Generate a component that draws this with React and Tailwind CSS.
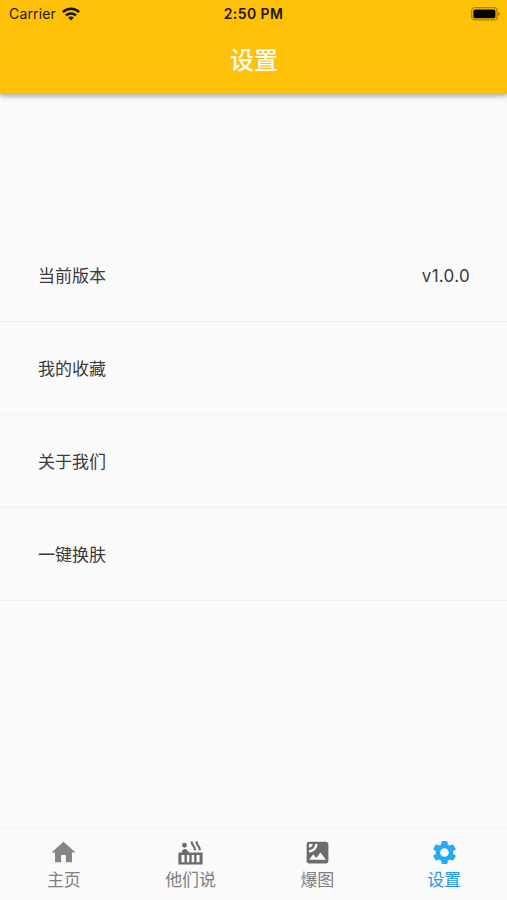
import { MdHome, MdSatellite, MdSettings } from 'react-icons/md';

const HotTubIcon = ({ className }) => (
  <svg className={className} viewBox="0 0 24 24" fill="currentColor">
    <circle cx="7" cy="6" r="2" />
    <path d="M11.15 12c-.31-.22-.59-.46-.82-.72l-1.4-1.55c-.19-.21-.43-.38-.69-.5-.29-.14-.62-.23-.96-.23h-.03C6.01 9 5 10.01 5 11.25V12H2v10h20V12H11.15zM7 20H4.5v-6H7v6zm4 0H9v-6h2v6zm4 0h-2v-6h2v6zm4.5 0H17v-6h2.5v6z" />
    <path
      d="M13 2.8C12.8 6.6 16 6.4 15.7 10.2M17 2.8C16.8 6.6 20 6.4 19.7 10.2"
      fill="none"
      stroke="currentColor"
      strokeWidth="1.8"
    />
  </svg>
);

const rows = [
  { label: '当前版本', value: 'v1.0.0', border: 'border-b border-[#f0f0f0]' },
  { label: '我的收藏', border: 'border-b border-[#f2f2f2]' },
  { label: '关于我们', border: 'border-b-2 border-[#f4f4f4]' },
  { label: '一键换肤', border: 'border-b border-[#f0f0f0]' },
];

const tabs = [
  { label: '主页', Icon: MdHome, iconColor: 'text-[#858585]' },
  { label: '他们说', Icon: HotTubIcon, iconColor: 'text-[#6c6c6c]' },
  { label: '爆图', Icon: MdSatellite, iconColor: 'text-[#6c6c6c]' },
  { label: '设置', Icon: MdSettings, iconColor: 'text-[#27aaf5]', active: true },
];

const WifiIcon = () => (
  <svg className="w-[18px] h-[14px]" viewBox="0 0 18 14" fill="none" stroke="#1c1602" strokeWidth="2.5">
    <path d="M0.9 5.1C5.4 0.7 12.6 0.7 17.1 5.1" />
    <path d="M4 8.4C6.8 5.7 11.2 5.7 14 8.4" />
    <path d="M9 13.6L6.2 10.7C7.8 9.2 10.2 9.2 11.8 10.7Z" fill="#1c1602" stroke="none" />
  </svg>
);

const BatteryIcon = () => (
  <svg className="w-[30px] h-[14px]" viewBox="0 0 30 14">
    <rect x="0.7" y="0.7" width="25.4" height="12.2" rx="3.2" fill="none" stroke="#a98006" strokeWidth="1.3" />
    <rect x="2.4" y="2.4" width="22" height="8.8" rx="1.5" fill="#000" />
    <path d="M27.3 4.7C29.6 5.5 29.6 8.1 27.3 8.9Z" fill="#a98006" />
  </svg>
);

const StatusBar = () => (
  <div className="grid grid-cols-3 items-center h-[27px] px-[7px] text-[#1c1602]">
    <div className="flex items-center gap-[6px] pl-[2px]">
      <span className="text-[14px] tracking-[0.15px]">Carrier</span>
      <WifiIcon />
    </div>
    <div className="text-center text-[14px] font-semibold tracking-[0.4px]">2:50 PM</div>
    <div className="flex justify-end -mr-px">
      <BatteryIcon />
    </div>
  </div>
);

const App = () => {
  return (
    <div className="flex flex-col h-screen overflow-hidden bg-[#fafafa] font-[Inter,'Noto_Sans_CJK_SC',sans-serif]">
      <header className="h-[94px] shrink-0 bg-[#ffc107] shadow-[0_2px_5px_rgba(0,0,0,0.34)]">
        <StatusBar />
        <h1 className="h-[67px] pl-px leading-[68px] text-center text-[24px] font-medium text-white">设置</h1>
      </header>

      <main className="flex-1 pt-[135px]">
        {rows.map(({ label, value, border }) => (
          <div
            key={label}
            className={`flex items-center justify-between h-[93px] pt-[4px] pl-[38px] pr-[37px] text-[17px] text-[#3a3a3a] ${border}`}
          >
            <span>{label}</span>
            {value && <span className="tracking-[0.3px]">{value}</span>}
          </div>
        ))}
      </main>

      <nav className="flex h-[72px] shrink-0 border-t border-[#f2f2f2]">
        {tabs.map(({ label, Icon, iconColor, active }) => (
          <button key={label} className="flex flex-1 flex-col items-center pt-[9px] pl-px">
            <Icon className={`w-[29px] h-[29px] ${iconColor}`} />
            <span className={`text-[17px] leading-[27px] ${active ? 'text-[#2196f3]' : 'text-[#808080]'}`}>
              {label}
            </span>
          </button>
        ))}
      </nav>
    </div>
  );
};

export default App;
